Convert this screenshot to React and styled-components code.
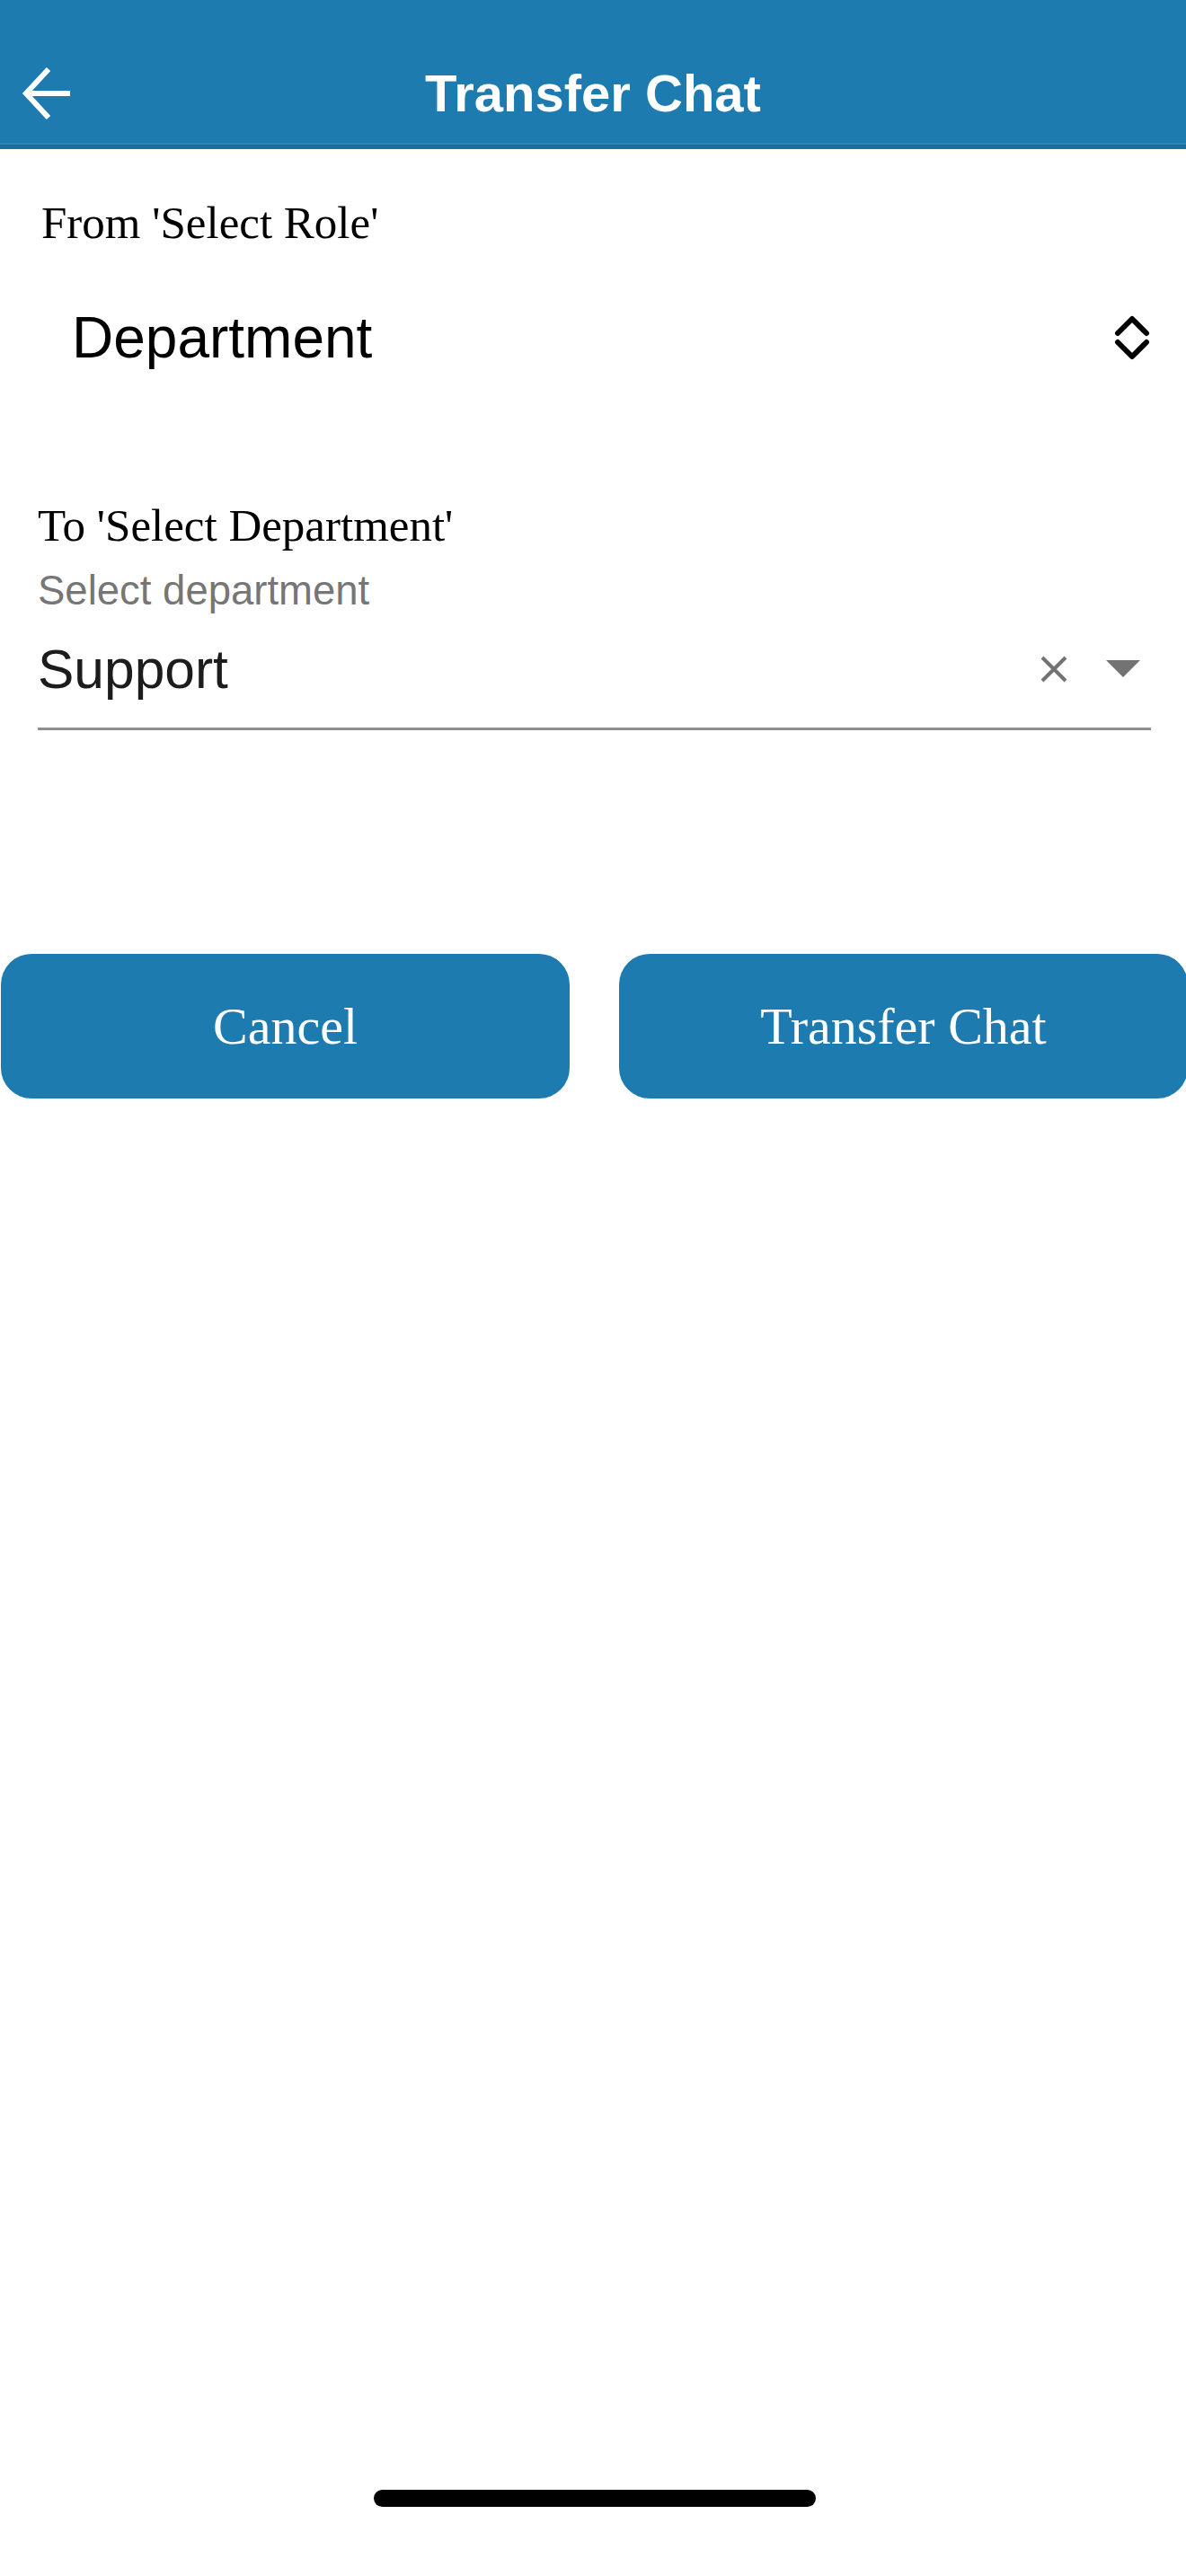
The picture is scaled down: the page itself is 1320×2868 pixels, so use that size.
import React from "react";
import styled, { createGlobalStyle } from "styled-components";

const Global = createGlobalStyle`
  html, body { margin: 0; padding: 0; background: #ffffff; }
  body { font-family: "Liberation Sans", Arial, sans-serif; }
  * { box-sizing: border-box; }
`;

const Screen = styled.div`
  width: 1320px;
  min-height: 2868px;
  display: flex;
  flex-direction: column;
  background: #ffffff;
  overflow: hidden;
`;

const Header = styled.header`
  height: 166px;
  padding-top: 44px;
  background: #1e7baf;
  border-bottom: 5px solid #1a6d9e;
  box-shadow: inset 0 -2px 0 #2a86bb;
  display: grid;
  grid-template-columns: 120px 1fr 120px;
  align-items: center;
`;

const BackButton = styled.button`
  width: 120px;
  height: 120px;
  border: 0;
  padding: 0 0 0 19px;
  background: transparent;
  display: flex;
  align-items: center;
  justify-content: flex-start;
  cursor: pointer;
`;

const Title = styled.h1`
  margin: 0;
  text-align: center;
  color: #ffffff;
  font-family: "Liberation Sans", Arial, sans-serif;
  font-weight: 700;
  font-size: 58px;
  line-height: 120px;
`;

const Form = styled.div`
  padding: 52px 39px 0 42px;
  display: flex;
  flex-direction: column;
`;

const Label = styled.div`
  font-family: "Liberation Serif", "Times New Roman", serif;
  font-size: 51px;
  line-height: 60px;
  color: #000000;
  padding-left: ${(p) => (p.$inset ? "4px" : "0")};
  margin-top: ${(p) => p.$top || 0}px;
`;

const NativeSelect = styled.div`
  margin-top: 62px;
  padding-left: 38px;
  padding-right: 1px;
  display: flex;
  align-items: center;
  justify-content: space-between;
  height: 72px;
`;

const SelectValue = styled.span`
  font-size: 64px;
  line-height: 72px;
  color: #000000;
`;

const Hint = styled.div`
  margin-top: 17px;
  font-size: 45.5px;
  line-height: 52px;
  color: #767676;
`;

const Field = styled.div`
  margin-top: 27px;
  padding-bottom: 31px;
  border-bottom: 3px solid #8e8e8e;
  display: flex;
  align-items: center;
  justify-content: space-between;
`;

const FieldValue = styled.span`
  font-size: 60.5px;
  line-height: 68px;
  color: #1c1c1c;
`;

const FieldIcons = styled.div`
  display: flex;
  align-items: center;
  gap: 42px;
  padding-right: 12px;
`;

const Actions = styled.div`
  margin-top: 249px;
  display: flex;
  gap: 55px;
  padding-left: 1px;
`;

const ActionButton = styled.button`
  flex: 0 0 633px;
  height: 161px;
  border: 0;
  border-radius: 34px;
  background: #1e7baf;
  color: #ffffff;
  font-family: "Liberation Serif", "Times New Roman", serif;
  font-size: 58px;
  cursor: pointer;
`;

const HomeBar = styled.div`
  margin: auto 0 77px 416px;
  width: 492px;
  height: 19px;
  border-radius: 10px;
  background: #000000;
`;

const BackArrow = () => (
  <svg width="60" height="64" viewBox="0 0 60 64" aria-hidden="true">
    <path
      d="M10 32 H59 M35 5 L10 32 L35 59"
      fill="none"
      stroke="#ffffff"
      strokeWidth="6"
      strokeLinecap="butt"
      strokeLinejoin="miter"
    />
  </svg>
);

const UpDown = () => (
  <svg width="40" height="50" viewBox="0 0 40 50" aria-hidden="true">
    <path
      d="M4 20 L20 4 L36 20 M4 30 L20 46 L36 30"
      fill="none"
      stroke="#000000"
      strokeWidth="6"
      strokeLinecap="round"
      strokeLinejoin="round"
    />
  </svg>
);

const Clear = () => (
  <svg width="32" height="32" viewBox="0 0 32 32" aria-hidden="true">
    <path d="M3 3 L29 29 M29 3 L3 29" stroke="#737373" strokeWidth="4" />
  </svg>
);

const Caret = () => (
  <svg width="38" height="20" viewBox="0 0 38 20" aria-hidden="true">
    <path d="M0 0 H38 L19 19 Z" fill="#737373" />
  </svg>
);

export default function App() {
  return (
    <>
      <Global />
      <Screen>
        <Header>
          <BackButton aria-label="Back">
            <BackArrow />
          </BackButton>
          <Title>Transfer Chat</Title>
          <span />
        </Header>
        <Form>
          <Label $inset>From 'Select Role'</Label>
          <NativeSelect>
            <SelectValue>Department</SelectValue>
            <UpDown />
          </NativeSelect>
          <Label $top={143}>To 'Select Department'</Label>
          <Hint>Select department</Hint>
          <Field>
            <FieldValue>Support</FieldValue>
            <FieldIcons>
              <Clear />
              <Caret />
            </FieldIcons>
          </Field>
        </Form>
        <Actions>
          <ActionButton>Cancel</ActionButton>
          <ActionButton>Transfer Chat</ActionButton>
        </Actions>
        <HomeBar />
      </Screen>
    </>
  );
}
